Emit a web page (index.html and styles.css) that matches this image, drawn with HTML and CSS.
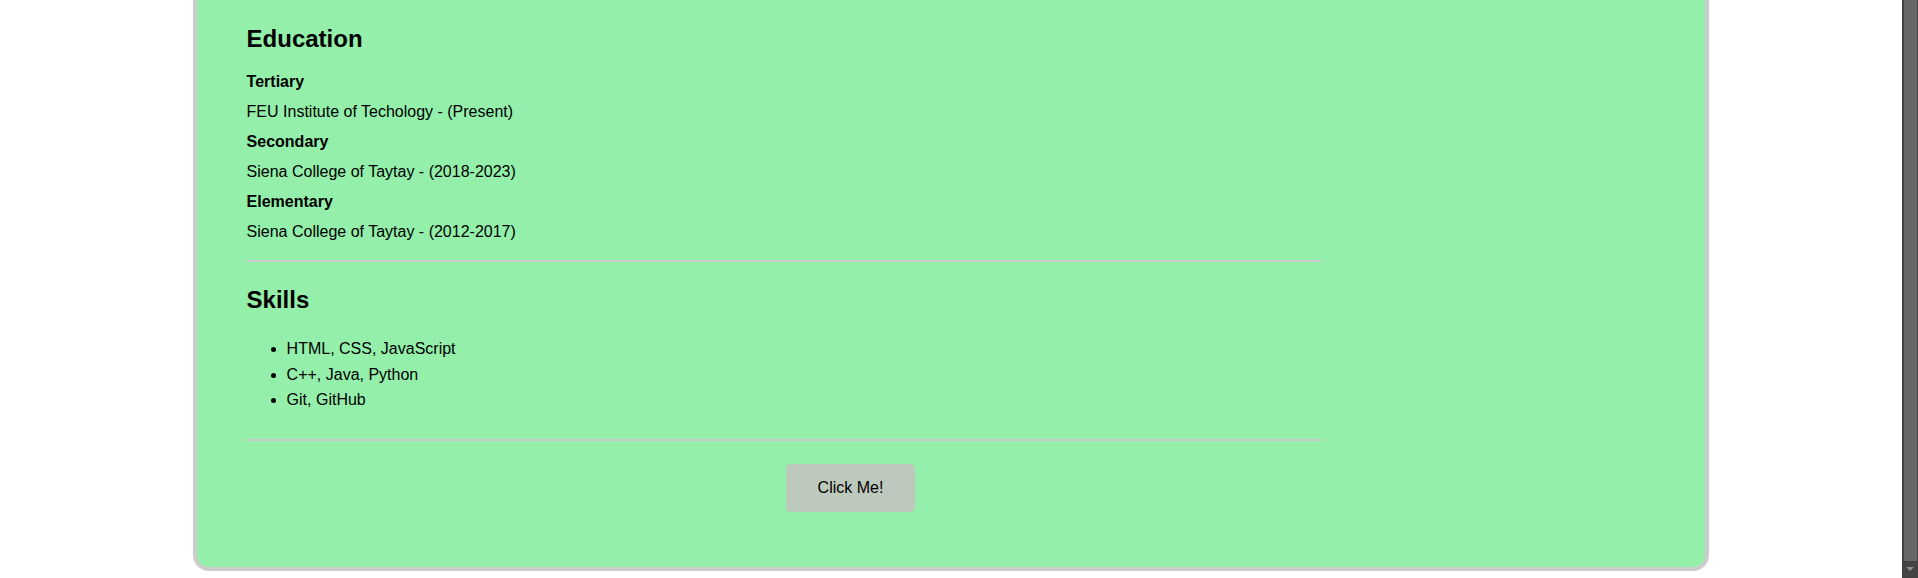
FILE: index.html
```html
<!DOCTYPE html>
<html lang="en">
<head>
<meta charset="utf-8">
<title>Resume</title>
<link rel="stylesheet" href="styles.css">
</head>
<body>
<main class="card">
  <div class="content">
    <section class="education">
      <h2 class="section-title">Education</h2>
      <h4 class="entry-label">Tertiary</h4>
      <p class="entry-text">FEU Institute of Techology - (Present)</p>
      <h4 class="entry-label">Secondary</h4>
      <p class="entry-text">Siena College of Taytay - (2018-2023)</p>
      <h4 class="entry-label">Elementary</h4>
      <p class="entry-text">Siena College of Taytay - (2012-2017)</p>
    </section>
    <hr class="divider">
    <section class="skills">
      <h2 class="section-title">Skills</h2>
      <ul class="skill-list">
        <li>HTML, CSS, JavaScript</li>
        <li>C++, Java, Python</li>
        <li>Git, GitHub</li>
      </ul>
    </section>
    <hr class="divider divider--end">
  </div>
  <div class="actions">
    <button class="btn" type="button">Click Me!</button>
  </div>
</main>
<div class="scrollbar" aria-hidden="true">
  <div class="scrollbar-thumb"></div>
  <div class="scrollbar-arrow"></div>
</div>
</body>
</html>
```
FILE: styles.css
```css
html {
  overflow: hidden;
  background: #ffffff;
}

body {
  margin: 0 24px 7px 8px;
  font-family: "Liberation Sans", Arial, sans-serif;
  font-size: 16px;
  color: #000;
}

.card {
  width: calc(80% - 100px);
  margin: 0 auto;
  background: #93efaa;
  border: 4px solid #cccccc;
  border-top: none;
  border-radius: 0 0 16px 16px;
  padding: 25px 50px 55px;
}

.content {
  width: 1074px;
}

.section-title {
  margin: 0 0 20px;
  font-size: 24px;
  font-weight: bold;
}

.entry-label {
  margin: 12px 0;
  font-size: 16px;
  font-weight: bold;
}

.entry-text {
  margin: 12px 0;
}

.divider {
  border: 0;
  height: 2px;
  background: #cbc6cb;
  margin: 19px 0 24px;
}

.divider--end {
  margin-bottom: 23px;
}

.skill-list {
  margin: 22px 0 26px;
  padding-left: 40px;
  line-height: 25.6px;
}

.actions {
  display: flex;
  padding-left: 539px;
}

.btn {
  font-family: "Liberation Sans", Arial, sans-serif;
  font-size: 16px;
  color: #000;
  background: #bdc9bd;
  border: none;
  border-radius: 5px;
  padding: 15px 32px;
  line-height: 18.4px;
  cursor: pointer;
}

.scrollbar {
  position: fixed;
  top: 0;
  right: 0;
  width: 16px;
  height: 100%;
  background: #434343;
}

.scrollbar-thumb {
  position: absolute;
  top: 0;
  left: 2px;
  width: 13px;
  height: 561px;
  background: #676767;
}

.scrollbar-arrow {
  position: absolute;
  left: 4px;
  top: 567px;
  width: 0;
  height: 0;
  border-left: 4px solid transparent;
  border-right: 4px solid transparent;
  border-top: 4px solid #8c8c8c;
}
```
